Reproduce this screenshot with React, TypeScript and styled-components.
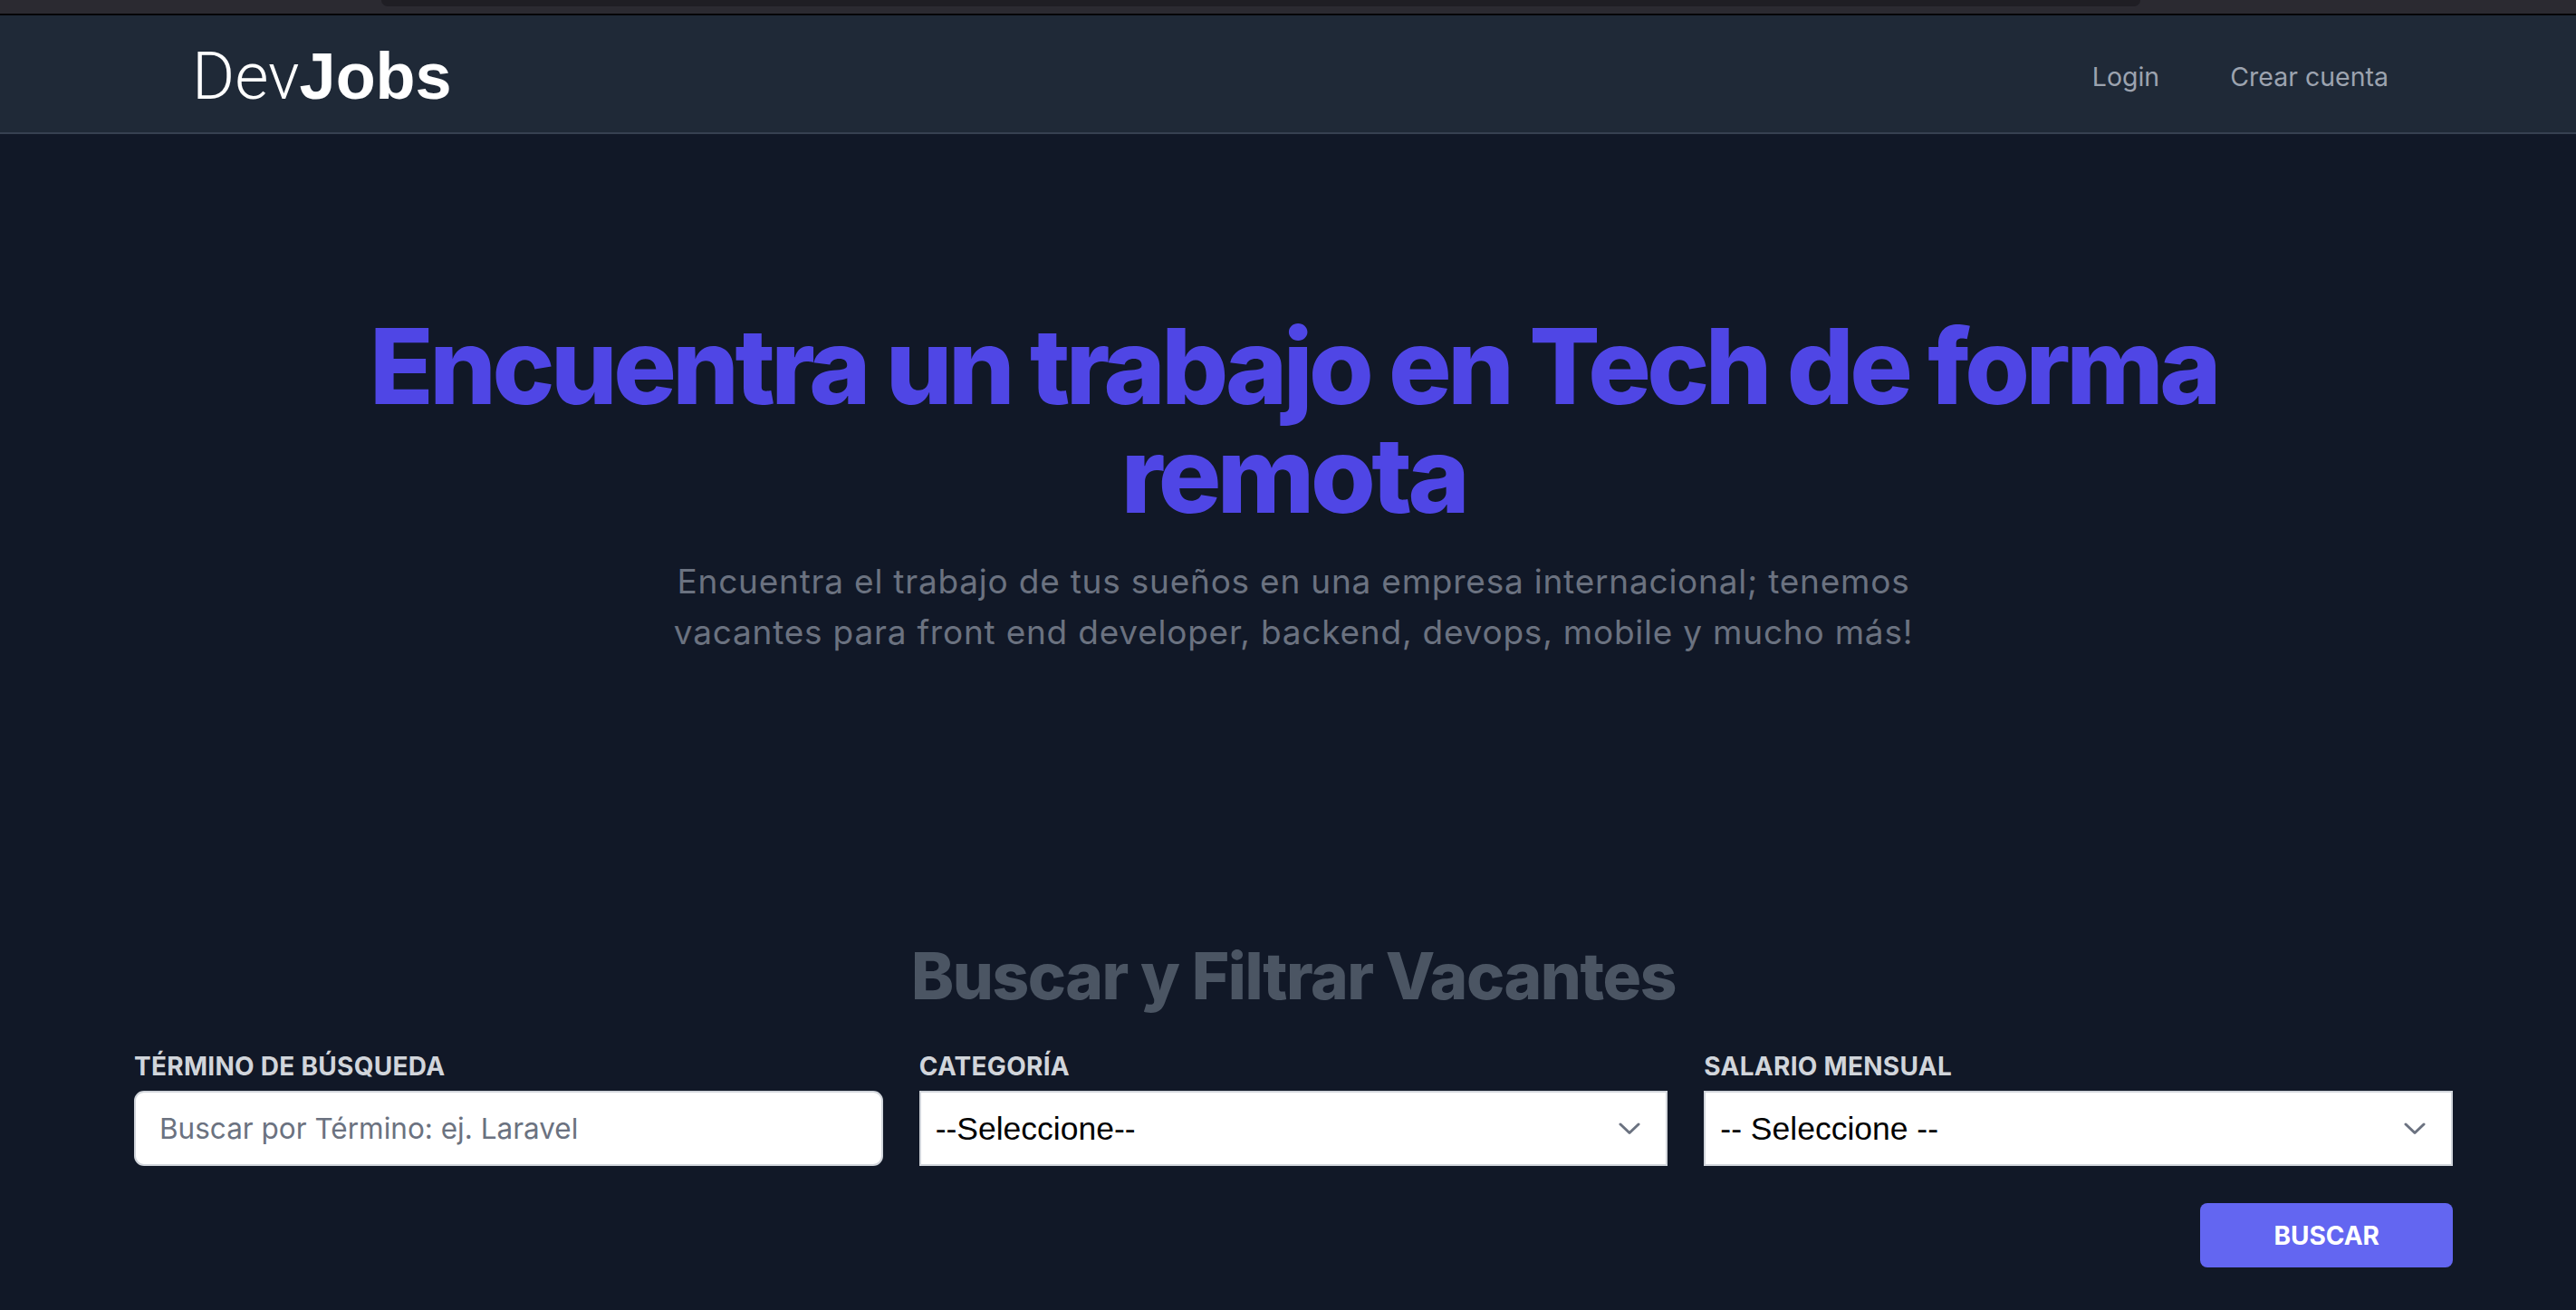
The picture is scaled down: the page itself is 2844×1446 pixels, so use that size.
import React from "react";
import styled, { createGlobalStyle } from "styled-components";

const GlobalStyle = createGlobalStyle`
  * { box-sizing: border-box; }
  html, body { margin: 0; padding: 0; background: #111827; }
  body { font-family: "Inter", "Noto Sans", sans-serif; min-height: 100vh; }
  #root { min-height: 100vh; }
`;

const Page = styled.div`
  min-height: 100vh;
  background: #111827;
  display: flex;
  flex-direction: column;
`;

const BrowserStrip = styled.div`
  height: 17px;
  background: #2b2a31;
  border-bottom: 2px solid #050507;
  display: flex;
  padding-left: 421px;
`;

const BrowserTab = styled.div`
  width: 1942px;
  height: 7px;
  background: #1f1e24;
  border-radius: 0 0 9px 9px;
`;

const NavBar = styled.header`
  height: 131px;
  background: #1f2937;
  border-bottom: 2px solid #374151;
`;

const NavInner = styled.div`
  width: 2560px;
  margin-left: 148px;
  height: 100%;
  padding: 0 71px 0 64px;
  display: flex;
  align-items: center;
  justify-content: space-between;
`;

const Logo = styled.a`
  font-size: 72px;
  line-height: 1;
  color: #ffffff;
  text-decoration: none;
  display: flex;
  align-items: baseline;
  margin-top: 5px;
`;

const LogoLight = styled.span`
  font-family: "Roboto", "Liberation Sans", sans-serif;
  font-weight: 300;
`;

const LogoBold = styled.span`
  font-family: "Liberation Sans", Arial, sans-serif;
  font-weight: 700;
`;

const NavLinks = styled.nav`
  display: flex;
  align-items: center;
  gap: 78px;
  margin-top: 6px;
`;

const NavLink = styled.a`
  font-family: "Inter", sans-serif;
  font-size: 28.5px;
  color: #9ca3af;
  text-decoration: none;
  line-height: 40px;
`;

const Main = styled.main`
  width: 2560px;
  margin-left: 148px;
  display: flex;
  flex-direction: column;
  align-items: center;
`;

const Hero = styled.section`
  padding-top: 196px;
  display: flex;
  flex-direction: column;
  align-items: center;
`;

const HeroTitle = styled.h1`
  margin: 0;
  font-family: "Inter", sans-serif;
  font-weight: 800;
  font-size: 116px;
  line-height: 120px;
  letter-spacing: -0.039em;
  color: #4f46e5;
  text-align: center;
  max-width: 2200px;
`;

const HeroText = styled.p`
  margin: 30px 0 0;
  font-family: "Inter", sans-serif;
  font-size: 37px;
  line-height: 56px;
  letter-spacing: 0.021em;
  color: #6b7280;
  text-align: center;
  max-width: 1440px;
`;

const SearchSection = styled.section`
  width: 100%;
  margin-top: 311px;
  display: flex;
  flex-direction: column;
`;

const SearchTitle = styled.h2`
  margin: 0;
  font-family: "Inter", sans-serif;
  font-weight: 800;
  font-size: 71px;
  line-height: 80px;
  letter-spacing: -0.02em;
  color: #4b5563;
  text-align: center;
`;

const FilterGrid = styled.form`
  margin-top: 40px;
  display: grid;
  grid-template-columns: repeat(3, 1fr);
  column-gap: 40px;
`;

const Field = styled.div`
  display: flex;
  flex-direction: column;
`;

const Label = styled.label`
  font-family: "Inter", sans-serif;
  font-weight: 700;
  font-size: 28px;
  line-height: 40px;
  letter-spacing: 0.01em;
  text-transform: uppercase;
  color: #d1d5db;
  margin-bottom: 7px;
`;

const TextInput = styled.input`
  height: 83px;
  width: 100%;
  border: 2px solid #d1d5db;
  border-radius: 11px;
  background: #ffffff;
  padding: 0 26px;
  font-family: "Inter", sans-serif;
  font-size: 31.5px;
  color: #111827;
  outline: none;
  &::placeholder { color: #6b7280; }
`;

const SelectWrap = styled.div`
  position: relative;
  width: 100%;
`;

const Select = styled.select`
  appearance: none;
  -webkit-appearance: none;
  height: 83px;
  width: 100%;
  border: 2px solid #d1d5db;
  border-radius: 0;
  background: #ffffff;
  padding: 0 70px 0 16px;
  font-family: "Liberation Sans", Arial, sans-serif;
  font-size: 35.5px;
  color: #000000;
  outline: none;
`;

const Chevron = styled.svg`
  position: absolute;
  right: 30px;
  top: 35px;
  width: 24px;
  height: 14px;
  pointer-events: none;
`;

const ButtonRow = styled.div`
  margin-top: 41px;
  display: flex;
  justify-content: flex-end;
`;

const SearchButton = styled.button`
  height: 71px;
  padding: 0 81px;
  border: none;
  border-radius: 8px;
  background: #6366f1;
  color: #ffffff;
  font-family: "Inter", sans-serif;
  font-weight: 700;
  font-size: 28px;
  text-transform: uppercase;
  cursor: pointer;
`;

const ChevronIcon = () => (
  <Chevron viewBox="0 0 24 14" fill="none">
    <polyline
      points="2,2 12,11.5 22,2"
      stroke="#6b7280"
      strokeWidth="3"
      strokeLinecap="round"
      strokeLinejoin="round"
    />
  </Chevron>
);

export default function App() {
  return (
    <>
      <GlobalStyle />
      <Page>
        <BrowserStrip>
          <BrowserTab />
        </BrowserStrip>
        <NavBar>
          <NavInner>
            <Logo href="#">
              <LogoLight>Dev</LogoLight>
              <LogoBold>Jobs</LogoBold>
            </Logo>
            <NavLinks>
              <NavLink href="#">Login</NavLink>
              <NavLink href="#">Crear cuenta</NavLink>
            </NavLinks>
          </NavInner>
        </NavBar>
        <Main>
          <Hero>
            <HeroTitle>Encuentra un trabajo en Tech de forma remota</HeroTitle>
            <HeroText>
              Encuentra el trabajo de tus sueños en una empresa internacional; tenemos
              vacantes para front end developer, backend, devops, mobile y mucho más!
            </HeroText>
          </Hero>
          <SearchSection>
            <SearchTitle>Buscar y Filtrar Vacantes</SearchTitle>
            <FilterGrid onSubmit={(e) => e.preventDefault()}>
              <Field>
                <Label htmlFor="termino">Término de búsqueda</Label>
                <TextInput id="termino" type="text" placeholder="Buscar por Término: ej. Laravel" />
              </Field>
              <Field>
                <Label htmlFor="categoria">Categoría</Label>
                <SelectWrap>
                  <Select id="categoria" defaultValue="">
                    <option value="">--Seleccione--</option>
                  </Select>
                  <ChevronIcon />
                </SelectWrap>
              </Field>
              <Field>
                <Label htmlFor="salario">Salario mensual</Label>
                <SelectWrap>
                  <Select id="salario" defaultValue="">
                    <option value="">-- Seleccione --</option>
                  </Select>
                  <ChevronIcon />
                </SelectWrap>
              </Field>
            </FilterGrid>
            <ButtonRow>
              <SearchButton type="button">Buscar</SearchButton>
            </ButtonRow>
          </SearchSection>
        </Main>
      </Page>
    </>
  );
}
